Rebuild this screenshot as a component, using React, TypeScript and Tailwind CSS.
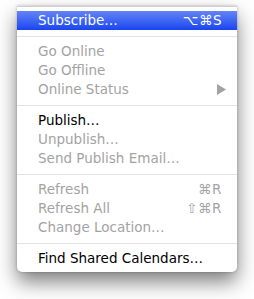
import React from "react";

type Item =
	| { sep: true }
	| { label: string; enabled?: boolean; shortcut?: string; submenu?: boolean; active?: boolean; sep?: false };

const items: Item[] = [
	{ label: "Subscribe…", enabled: true, shortcut: "⌥⌘S", active: true },
	{ sep: true },
	{ label: "Go Online" },
	{ label: "Go Offline" },
	{ label: "Online Status", submenu: true },
	{ sep: true },
	{ label: "Publish…", enabled: true },
	{ label: "Unpublish…" },
	{ label: "Send Publish Email…" },
	{ sep: true },
	{ label: "Refresh", shortcut: "⌘R" },
	{ label: "Refresh All", shortcut: "⇧⌘R" },
	{ label: "Change Location…" },
	{ sep: true },
	{ label: "Find Shared Calendars…", enabled: true },
];

const MenuRow = ({ item }: { item: Item }) => {
	if (item.sep) {
		return (
			<div className="h-[12px] flex items-center">
				<div className="h-px w-full bg-[#e3e3e3]" />
			</div>
		);
	}
	const color = item.active ? "text-white" : item.enabled ? "text-black" : "text-[#a3a3a3]";
	return (
		<div
			className={`h-[19px] flex items-center justify-between pl-[21px] pr-[15px] ${color} ${
				item.active ? "bg-gradient-to-b from-[#6583f6] to-[#1a42f0]" : ""
			}`}
		>
			<span>{item.label}</span>
			{item.shortcut && <span className="tracking-[0.5px]">{item.shortcut}</span>}
			{item.submenu && (
				<svg width="9" height="11" viewBox="0 0 9 11" className="mr-[-4px]">
					<path d="M0 0 L9 5.5 L0 11 Z" fill="#a3a3a3" />
				</svg>
			)}
		</div>
	);
};

export default function App() {
	return (
		<div className="w-[254px] h-[299px] bg-white pt-[6px] pl-[17px]">
			<div
				className="w-[220px] bg-white border-t border-[#cfcfcf] rounded-b-[5px] pt-[4px] pb-[4px] text-[13.5px] leading-none shadow-[0_10px_20px_rgba(0,0,0,0.5),0_0_3px_rgba(0,0,0,0.25)]"
				style={{ fontFamily: '"DejaVu Sans", sans-serif' }}
			>
				{items.map((it, i) => (
					<MenuRow key={i} item={it} />
				))}
			</div>
		</div>
	);
}
